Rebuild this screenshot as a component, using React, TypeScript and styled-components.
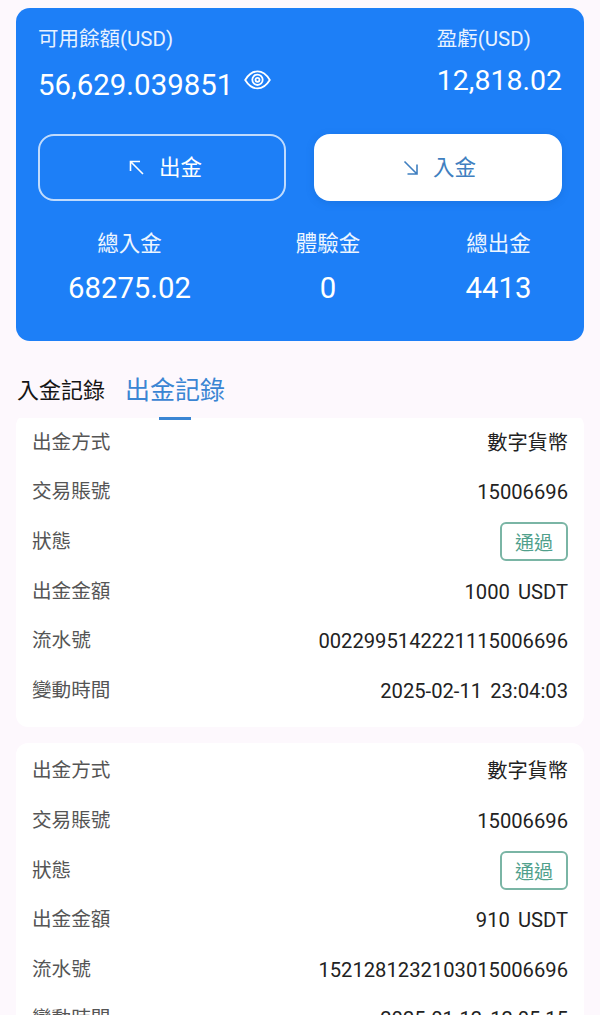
import React from 'react'
import styled, { createGlobalStyle } from 'styled-components'

const GlobalStyle = createGlobalStyle`
html, body {
  margin: 0;
  padding: 0;
  height: 1015px;
  overflow: hidden;
  background: #fdf8fd;
}
* { box-sizing: border-box; }
`

const records = [
  { amount: '1000 USDT', serial: '0022995142221115006696', time: '2025-02-11 23:04:03' },
  { amount: '910 USDT', serial: '1521281232103015006696', time: '2025-01-12 12:05:15' },
]

const Arrow = ({ down }: { down?: boolean }) => (
  <svg width="16" height="16" viewBox="0 0 16 16" fill="none" stroke="currentColor" strokeWidth="1.6">
    {down ? <path d="M1.5 1.5 14 14M14 4.5V14H4.5" /> : <path d="M14 14 1.5 1.5M1.5 11V1.5H11" />}
  </svg>
)

const App = () => {
  return (
    <Page>
      <GlobalStyle />
      <Summary>
        <TopRow>
          <div>
            <Label>可用餘額(USD)</Label>
            <BalanceRow>
              <Balance>56,629.039851</Balance>
              <svg width="27" height="20" viewBox="0 0 27 20" fill="none" stroke="#fff" strokeWidth="1.8">
                <path d="M1.2 10C4.5 4.4 8.6 1.4 13.5 1.4S22.5 4.4 25.8 10C22.5 15.4 18.4 18.4 13.5 18.4S4.5 15.4 1.2 10Z" />
                <circle cx="13.5" cy="9.8" r="5.2" />
                <circle cx="13.5" cy="9.8" r="2" />
              </svg>
            </BalanceRow>
          </div>
          <Profit>
            <Label>盈虧(USD)</Label>
            <ProfitValue>12,818.02</ProfitValue>
          </Profit>
        </TopRow>
        <Buttons>
          <ActionButton>
            <Arrow />
            出金
          </ActionButton>
          <ActionButton $solid>
            <Arrow down />
            入金
          </ActionButton>
        </Buttons>
        <Totals>
          <Total>
            <TotalLabel>總入金</TotalLabel>
            <TotalValue>68275.02</TotalValue>
          </Total>
          <Total>
            <TotalLabel>體驗金</TotalLabel>
            <TotalValue>0</TotalValue>
          </Total>
          <Total>
            <TotalLabel>總出金</TotalLabel>
            <TotalValue>4413</TotalValue>
          </Total>
        </Totals>
      </Summary>

      <Tabs>
        <Tab>入金記錄</Tab>
        <Tab $active>出金記錄</Tab>
      </Tabs>

      {records.map((el) => {
        return (
          <Record key={el.time}>
            <Row><Key>出金方式</Key><Value>數字貨幣</Value></Row>
            <Row><Key>交易賬號</Key><Value>15006696</Value></Row>
            <Row><Key>狀態</Key><Status>通過</Status></Row>
            <Row><Key>出金金額</Key><Value>{el.amount}</Value></Row>
            <Row><Key>流水號</Key><Value>{el.serial}</Value></Row>
            <Row><Key>變動時間</Key><Value>{el.time}</Value></Row>
          </Record>
        )
      })}
    </Page>
  )
}

const Page = styled.div`
width: 600px;
height: 1015px;
overflow: hidden;
padding: 8px 16px 0;
font-family: Roboto, "Noto Sans CJK TC", sans-serif;
background: #fdf8fd;
`

const Summary = styled.div`
height: 333px;
background: #1d7ff7;
border-radius: 14px;
padding: 19px 22px 0;
color: #fff;
`

const TopRow = styled.div`
display: flex;
justify-content: space-between;
`

const Label = styled.div`
font-size: 20.5px;
line-height: 24px;
color: #e8f2ff;
`

const BalanceRow = styled.div`
display: flex;
align-items: flex-start;
gap: 11px;
margin-top: 15px;

svg { margin-top: 4px; }
`

const Balance = styled.div`
font-size: 29.4px;
line-height: 38px;
`

const Profit = styled.div`
display: flex;
flex-direction: column;
align-items: flex-start;
`

const ProfitValue = styled.div`
font-size: 28.5px;
line-height: 38px;
margin-top: 11px;
`

const Buttons = styled.div`
display: flex;
justify-content: space-between;
margin-top: 30px;
`

const ActionButton = styled.div<{ $solid?: boolean }>`
width: 248px;
height: 67px;
border-radius: 16px;
border: ${(p) => (p.$solid ? 'none' : '2px solid rgba(255, 255, 255, 0.72)')};
background: ${(p) => (p.$solid ? '#fff' : 'transparent')};
box-shadow: ${(p) => (p.$solid ? '0 2px 8px rgba(10, 70, 150, 0.18)' : 'none')};
color: ${(p) => (p.$solid ? '#3f7fc0' : '#fff')};
display: flex;
align-items: center;
justify-content: center;
gap: 14px;
padding: 0 0 5px ${(p) => (p.$solid ? '3px' : '7px')};
font-size: 21.5px;

svg { margin-top: 5px; }
`

const Totals = styled.div`
display: grid;
grid-template-columns: 183px 214px 127px;
margin-top: 29px;
text-align: center;
`

const Total = styled.div``

const TotalLabel = styled.div`
font-size: 21.5px;
line-height: 28px;
color: #eef6ff;
`

const TotalValue = styled.div`
font-size: 29.3px;
line-height: 38px;
margin-top: 11px;
`

const Tabs = styled.div`
position: relative;
z-index: 1;
display: flex;
align-items: flex-start;
gap: 20px;
height: 77px;
margin: 0 0 -4px -16px;
padding: 32px 0 0 17px;
width: 600px;
background: #fdf8fd;
`

const Tab = styled.div<{ $active?: boolean }>`
position: relative;
height: 30px;
display: flex;
align-items: center;
font-size: ${(p) => (p.$active ? '25px' : '22px')};
color: ${(p) => (p.$active ? '#3a85d3' : '#151515')};

&::after {
  content: '';
  display: ${(p) => (p.$active ? 'block' : 'none')};
  position: absolute;
  left: 34px;
  top: 44px;
  width: 32px;
  height: 3px;
  background: #3a85d3;
}
`

const Record = styled.div`
background: #fff;
border-radius: 12px;
margin-bottom: 16px;
padding: 4px 16px 11px 16px;
`

const Row = styled.div`
display: flex;
justify-content: space-between;
align-items: center;
height: 49.6px;
`

const Key = styled.div`
font-size: 19.6px;
line-height: 24px;
color: #555;
`

const Value = styled.div`
font-size: 20.2px;
line-height: 24px;
word-spacing: 3px;
color: #222;
`

const Status = styled.div`
width: 68px;
height: 39px;
border: 2px solid #7ab5a5;
border-radius: 6px;
color: #50a08c;
font-size: 19px;
display: flex;
align-items: center;
justify-content: center;
`

export default App
